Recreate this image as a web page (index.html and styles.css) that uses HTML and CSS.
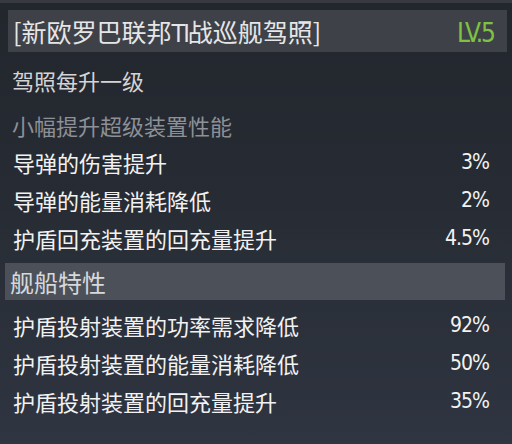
FILE: index.html
```html
<!DOCTYPE html>
<html lang="zh">
<head>
<meta charset="utf-8">
<link rel="stylesheet" href="styles.css">
</head>
<body>
<div class="panel">
  <div class="title-bar">
    <span class="title">[新欧罗巴联邦<span class="latin">TI</span>战巡舰驾照]</span>
    <span class="level">LV.5</span>
  </div>
  <div class="line">驾照每升一级</div>
  <div class="line sub">小幅提升超级装置性能</div>
  <div class="row"><span>导弹的伤害提升</span><span class="num">3%</span></div>
  <div class="row"><span>导弹的能量消耗降低</span><span class="num">2%</span></div>
  <div class="row"><span>护盾回充装置的回充量提升</span><span class="num">4.5%</span></div>
  <div class="section">舰船特性</div>
  <div class="row"><span>护盾投射装置的功率需求降低</span><span class="num">92%</span></div>
  <div class="row"><span>护盾投射装置的能量消耗降低</span><span class="num">50%</span></div>
  <div class="row"><span>护盾投射装置的回充量提升</span><span class="num">35%</span></div>
</div>
</body>
</html>
```

FILE: styles.css
```css
html, body {
  margin: 0;
  padding: 0;
  background: #2a2f38;
}
.panel {
  width: 512px;
  height: 444px;
  box-sizing: border-box;
  border-top: 3px solid #373a41;
  background: linear-gradient(180deg, #22262d 0%, #272c34 45%, #2f3541 100%);
  font-family: "Noto Sans CJK SC", "Noto Sans", sans-serif;
  overflow: hidden;
}
.title-bar {
  margin: 7px 5px 0 8px;
  height: 42px;
  box-sizing: border-box;
  background: #3e4148;
  display: flex;
  align-items: center;
  justify-content: space-between;
  padding: 3px 13px 0 5px;
}
.title {
  font-size: 25px;
  color: #e6e6e6;
  line-height: 1;
}
.latin {
  font-family: "DejaVu Sans Condensed", "Liberation Sans Narrow", sans-serif;
  letter-spacing: -2px;
}
.level {
  font-family: "DejaVu Sans Condensed", "Liberation Sans Narrow", sans-serif;
  font-size: 26px;
  line-height: 1;
  color: #7fc241;
  letter-spacing: -2px;
}
.line {
  margin-top: 9px;
  height: 38px;
  display: flex;
  align-items: center;
  padding-left: 12px;
  font-size: 22px;
  color: #d4d4d4;
}
.line.sub {
  margin-top: 8px;
  height: 36px;
  color: #8d9096;
}
.row {
  height: 38px;
  display: flex;
  align-items: center;
  justify-content: space-between;
  padding: 0 23px 0 13px;
  font-size: 22px;
  color: #f2f2f2;
}
.num {
  font-family: "DejaVu Sans Condensed", "Liberation Sans Narrow", sans-serif;
  font-size: 21px;
  letter-spacing: -1px;
}
.section {
  margin: 6px 7px 6px 5px;
  height: 37px;
  background: #4c5159;
  display: flex;
  align-items: center;
  padding-left: 5px;
  font-size: 24px;
  color: #d6d8dc;
}
```
